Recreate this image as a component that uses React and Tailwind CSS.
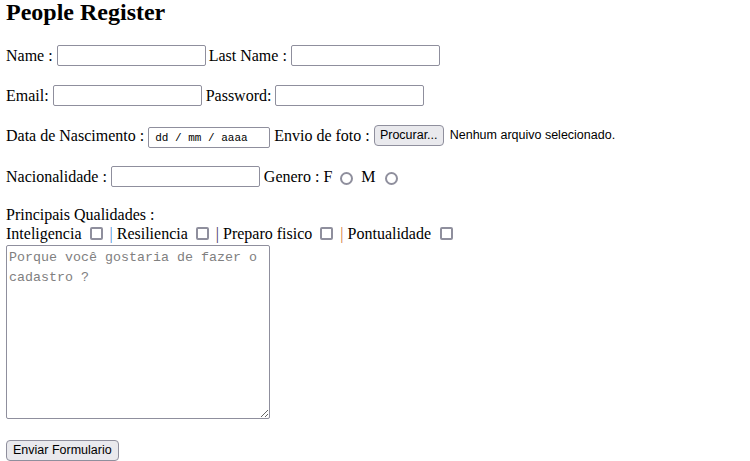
import React from 'react';

const serif = "font-['Liberation_Serif',serif]";
const sans = "font-['Liberation_Sans',Arial,sans-serif]";

const TextInput = ({ className = '', ...props }) => (
  <input
    type="text"
    className={`h-[21px] w-[149px] rounded-[2px] border border-[#8f8f9d] bg-white px-[4px] text-[13px] text-black outline-none ${sans} ${className}`}
    {...props}
  />
);

const Radio = ({ className = '', ...props }) => (
  <input
    type="radio"
    className={`h-[13px] w-[13px] shrink-0 appearance-none rounded-full border-2 border-[#8f8f9d] bg-white ${className}`}
    {...props}
  />
);

const Check = ({ className = '', ...props }) => (
  <input
    type="checkbox"
    className={`h-[13px] w-[13px] shrink-0 appearance-none rounded-[2px] border-2 border-[#8f8f9d] bg-white ${className}`}
    {...props}
  />
);

const FormButton = ({ children, className = '', ...props }) => (
  <button
    type="button"
    className={`h-[21px] whitespace-nowrap rounded-[4px] border border-[#8f8f9d] bg-[#e9e9ed] text-[12.5px] leading-[19px] text-black ${sans} ${className}`}
    {...props}
  >
    {children}
  </button>
);

export default function App() {
  return (
    <div className={`min-h-[461px] w-[750px] bg-white pl-[6px] text-[16px] text-black ${serif}`}>
      <h2 className="text-[24px] font-bold leading-[24px]">People Register</h2>

      <form>
        <div className="mt-[21px] flex h-[21px] items-center">
          <span>Name :</span>
          <TextInput className="ml-[4px]" name="name" />
          <span className="ml-[3px]">Last Name :</span>
          <TextInput className="ml-[4px]" name="lastName" />
        </div>

        <div className="mt-[19px] flex h-[21px] items-center">
          <span>Email:</span>
          <TextInput className="ml-[4px]" name="email" />
          <span className="ml-[4px]">Password:</span>
          <TextInput className="ml-[4px]" name="password" />
        </div>

        <div className="mt-[19px] flex h-[21px] items-center">
          <span>Data de Nascimento :</span>
          <input
            type="text"
            placeholder="dd / mm / aaaa"
            className="ml-[4px] mt-[4px] h-[21px] w-[122px] rounded-[2px] border border-[#8f8f9d] bg-white px-[6px] font-['Liberation_Mono',monospace] text-[11px] text-black outline-none placeholder:text-black"
          />
          <span className="ml-[4px]">Envio de foto :</span>
          <label className="ml-[4px] flex items-center">
            <FormButton className="w-[70px] px-[4px]">Procurar...</FormButton>
            <span className={`ml-[6px] text-[12.5px] ${sans}`}>Nenhum arquivo selecionado.</span>
            <input type="file" className="hidden" />
          </label>
        </div>

        <div className="mt-[20px] flex h-[21px] items-center">
          <span>Nacionalidade :</span>
          <TextInput className="ml-[4px]" name="nacionalidade" />
          <span className="ml-[4px]">Genero : F</span>
          <Radio className="ml-[8px] mt-[4px]" name="genero" value="F" />
          <span className="ml-[8px]">M</span>
          <Radio className="ml-[9px] mt-[4px]" name="genero" value="M" />
        </div>

        <p className="mt-[18px] leading-[19px]">Principais Qualidades :</p>
        <div className="flex h-[19px] items-center leading-[19px]">
          <span>Inteligencia</span>
          <Check className="ml-[8px]" />
          <span className="ml-[7px] text-[#4a8ad6]">|</span>
          <span className="ml-[4px]">Resiliencia</span>
          <Check className="ml-[8px]" />
          <span className="ml-[7px] text-[#3b3358]">|</span>
          <span className="ml-[4px]">Preparo fisico</span>
          <Check className="ml-[8px]" />
          <span className="ml-[7px] text-[#d0733a]">|</span>
          <span className="ml-[4px]">Pontualidade</span>
          <Check className="ml-[9px]" />
        </div>

        <textarea
          placeholder="Porque você gostaria de fazer o cadastro ?"
          className="mt-[2px] block h-[174px] w-[264px] resize rounded-[2px] border border-[#8f8f9d] bg-white px-[2px] py-[2px] font-['Liberation_Mono',monospace] text-[13.33px] text-black outline-none placeholder:text-[#808080]"
        />

        <FormButton className="mt-[21px] block px-[6px]">Enviar Formulario</FormButton>
      </form>
    </div>
  );
}
